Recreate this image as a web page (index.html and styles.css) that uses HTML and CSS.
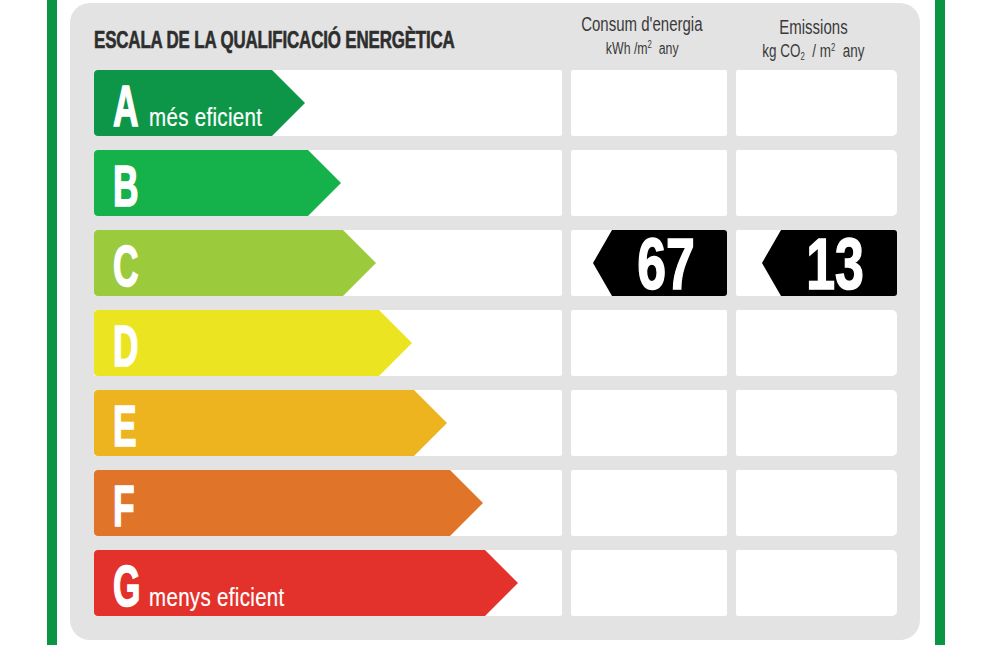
FILE: index.html
```html
<!DOCTYPE html>
<html lang="ca">
<head>
<meta charset="utf-8">
<title>Escala de la qualificació energètica</title>
<link rel="stylesheet" href="styles.css">
</head>
<body>
<div class="frame">
  <div class="panel">
    <div class="head">
      <div class="head-title"><span class="title-text">ESCALA DE LA QUALIFICACIÓ ENERGÈTICA</span></div>
      <div class="head-col head-col--energy">
        <span class="hc-line hc-main">Consum d'energia</span>
        <span class="hc-line hc-unit">kWh /m<sup>2</sup>&nbsp; any</span>
      </div>
      <div class="head-col head-col--co2">
        <span class="hc-line hc-main">Emissions</span>
        <span class="hc-line hc-unit hc-unit--co2">kg CO<sub>2</sub>&nbsp; / m<sup>2</sup>&nbsp; any</span>
      </div>
    </div>
    <div class="rows">
      <div class="row">
        <div class="cell cell--scale"><div class="arrow arrow--a"><span class="letter">A</span><span class="sub">més eficient</span></div></div>
        <div class="cell"></div>
        <div class="cell cell--last"></div>
      </div>
      <div class="row">
        <div class="cell cell--scale"><div class="arrow arrow--b"><span class="letter">B</span></div></div>
        <div class="cell"></div>
        <div class="cell cell--last"></div>
      </div>
      <div class="row">
        <div class="cell cell--scale"><div class="arrow arrow--c"><span class="letter">C</span></div></div>
        <div class="cell cell--value"><div class="tag tag--energy"><span class="num">67</span></div></div>
        <div class="cell cell--last cell--value"><div class="tag tag--co2"><span class="num">13</span></div></div>
      </div>
      <div class="row">
        <div class="cell cell--scale"><div class="arrow arrow--d"><span class="letter">D</span></div></div>
        <div class="cell"></div>
        <div class="cell cell--last"></div>
      </div>
      <div class="row">
        <div class="cell cell--scale"><div class="arrow arrow--e"><span class="letter">E</span></div></div>
        <div class="cell"></div>
        <div class="cell cell--last"></div>
      </div>
      <div class="row">
        <div class="cell cell--scale"><div class="arrow arrow--f"><span class="letter">F</span></div></div>
        <div class="cell"></div>
        <div class="cell cell--last"></div>
      </div>
      <div class="row">
        <div class="cell cell--scale"><div class="arrow arrow--g"><span class="letter">G</span><span class="sub">menys eficient</span></div></div>
        <div class="cell"></div>
        <div class="cell cell--last"></div>
      </div>
    </div>
  </div>
</div>
</body>
</html>
```
FILE: styles.css
```css
html, body {
  margin: 0;
  padding: 0;
  background: #ffffff;
}

body {
  font-family: "Liberation Sans", Arial, sans-serif;
  width: 992px;
  height: 645px;
  overflow: hidden;
}

.frame {
  box-sizing: border-box;
  margin-left: 47px;
  width: 898px;
  height: 645px;
  border-left: 10px solid #0b9444;
  border-right: 10px solid #0b9444;
  padding: 3px 15px 0 13px;
}

.panel {
  box-sizing: border-box;
  width: 850px;
  height: 637px;
  background: #e3e3e3;
  border-radius: 20px;
  padding: 0 23px 0 24px;
}

/* ---------- header ---------- */
.head {
  display: grid;
  grid-template-columns: 468px 156px 161px;
  column-gap: 9px;
  height: 67px;
}

.head-title {
  padding-top: 24px;
}

.title-text {
  display: inline-block;
  font-weight: bold;
  font-size: 23px;
  line-height: 26px;
  color: #2e2e2e;
  white-space: nowrap;
  transform: scaleX(0.735);
  transform-origin: left center;
  letter-spacing: -0.2px;
  -webkit-text-stroke: 0.6px #2e2e2e;
}

.head-col {
  display: flex;
  flex-direction: column;
  align-items: center;
  color: #3a3a3a;
  white-space: nowrap;
}

.head-col--energy {
  padding-top: 9px;
  padding-right: 14px;
}

.head-col--co2 {
  padding-top: 12px;
  padding-right: 7px;
}

.hc-line {
  display: block;
  transform: scaleX(0.77);
  transform-origin: center center;
}

.hc-main {
  font-size: 19.5px;
  line-height: 24px;
}

.hc-unit {
  font-size: 16px;
  line-height: 21px;
  margin-top: 2px;
}

.hc-unit--co2 {
  font-size: 17.5px;
}

.hc-unit sup {
  font-size: 10px;
  vertical-align: 6px;
  line-height: 0;
}

.hc-unit sub {
  font-size: 10px;
  vertical-align: -3px;
  line-height: 0;
}

/* ---------- rows ---------- */
.rows {
  display: flex;
  flex-direction: column;
  gap: 14px;
}

.row {
  display: grid;
  grid-template-columns: 468px 156px 161px;
  column-gap: 9px;
  height: 66px;
}

.cell {
  background: #ffffff;
  border-radius: 2px;
}

.cell--last {
  border-radius: 2px 5px 5px 2px;
}

/* ---------- arrows ---------- */
.arrow {
  box-sizing: border-box;
  height: 66px;
  display: flex;
  align-items: baseline;
  padding: 8px 0 0 19px;
  border-radius: 4px;
  clip-path: polygon(0 0, calc(100% - 33px) 0, 100% 50%, calc(100% - 33px) 100%, 0 100%);
  color: #ffffff;
}

.arrow--a { width: 211px; background: #0d9548; }
.arrow--b { width: 247px; background: #15b14b; }
.arrow--c { width: 282px; background: #9bca3d; }
.arrow--d { width: 318px; background: #eae520; }
.arrow--e { width: 353px; background: #eeb41f; }
.arrow--f { width: 389px; background: #e07428; }
.arrow--g { width: 424px; background: #e3312b; }

.letter {
  display: inline-block;
  width: 27px;
  font-weight: bold;
  font-size: 57px;
  line-height: 57px;
  transform: scaleX(0.62);
  transform-origin: left bottom;
  -webkit-text-stroke: 1.6px #ffffff;
}

.sub {
  display: inline-block;
  margin-left: 9px;
  font-size: 25px;
  line-height: 26px;
  white-space: nowrap;
  letter-spacing: 0.4px;
  transform: scaleX(0.82);
  transform-origin: left bottom;
  -webkit-text-stroke: 0.2px #ffffff;
}

/* ---------- value tags ---------- */
.cell--value {
  display: flex;
  justify-content: flex-end;
}

.tag {
  box-sizing: border-box;
  height: 66px;
  background: #000000;
  color: #ffffff;
  border-radius: 0 3px 3px 0;
  clip-path: polygon(19px 0, 100% 0, 100% 100%, 19px 100%, 0 50%);
  display: flex;
  align-items: center;
  justify-content: center;
  padding-left: 12px;
}

.tag--energy { width: 134px; }
.tag--co2 { width: 135px; }

.num {
  display: inline-block;
  font-weight: bold;
  font-size: 72px;
  line-height: 66px;
  transform: scaleX(0.72);
  transform-origin: center center;
  margin-top: 2px;
  -webkit-text-stroke: 1.6px #ffffff;
}
```
